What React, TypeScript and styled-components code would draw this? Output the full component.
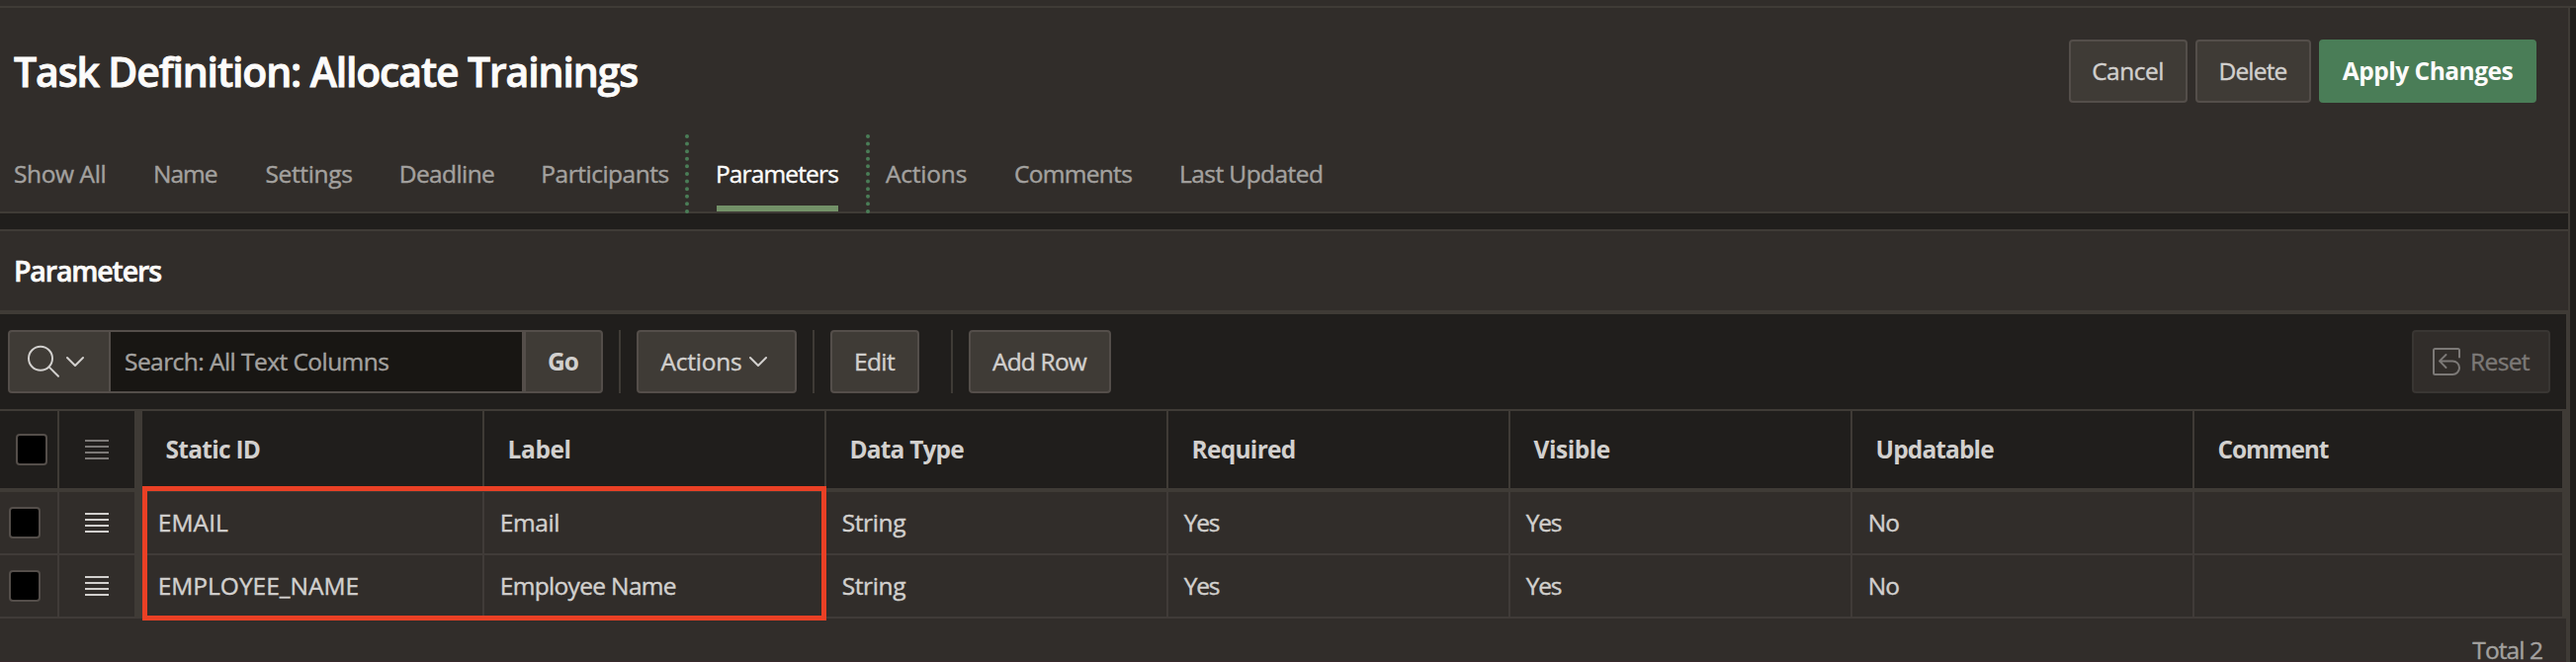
import React from 'react';
import styled, { createGlobalStyle, css } from 'styled-components';

const color = {
  panel: '#312d2a',
  dark: '#201e1c',
  field: '#181613',
  line: '#3f3b36',
  rowLine: '#403b38',
  button: '#3f3b36',
  buttonBorder: '#544e4a',
  muted: '#a3a19f',
  text: '#d2d0ce',
  white: '#fcfbfa',
  green: '#4a7d57',
  underline: '#739168',
  disabled: '#7c7977',
  highlight: '#ea4025',
};

const GlobalStyle = createGlobalStyle`
  * { box-sizing: border-box; }
  body {
    margin: 0;
    height: 670px;
    overflow: hidden;
    background: ${color.dark};
    color: ${color.text};
    font: 400 24.5px 'Open Sans', 'Noto Sans', sans-serif;
    -webkit-text-stroke-width: 0.4px;
  }
`;

const Page = styled.div`
  display: flex;
  flex-direction: column;
  height: 670px;
`;

const TopStrip = styled.div`
  flex: none;
  height: 8px;
  background: ${color.panel};
  border-bottom: 2px solid ${color.line};
`;

const Frame = styled.main`
  width: 2600px;
  flex: 1;
  display: flex;
  flex-direction: column;
  border-right: 2px solid ${color.line};
`;

const Text = styled.span<{ $track?: number }>`
  white-space: nowrap;
  letter-spacing: ${(p) => p.$track ?? 0}px;
`;

const PageHeader = styled.header`
  flex: none;
  height: 208px;
  background: ${color.panel};
  border-bottom: 2px solid ${color.line};
`;

const TitleRow = styled.div`
  height: 128px;
  display: flex;
  align-items: center;
  justify-content: space-between;
  padding: 0 32px 0 14px;
`;

const Title = styled.h1`
  margin: 0;
  font-size: 41px;
  line-height: 56px;
  font-weight: 600;
  letter-spacing: -1.14px;
  -webkit-text-stroke-width: 0.9px;
  color: ${color.white};
  white-space: nowrap;
`;

const ButtonGroup = styled.div`
  display: flex;
  gap: 8px;
`;

const Button = styled.button<{ $width: number; $variant?: 'hot' | 'disabled' }>`
  width: ${(p) => p.$width}px;
  height: 64px;
  display: flex;
  align-items: center;
  justify-content: center;
  gap: 6px;
  padding: 0 1px 0 0;
  font: inherit;
  line-height: 60px;
  color: ${color.text};
  background: ${color.button};
  border: 2px solid ${color.buttonBorder};
  border-radius: 4px;
  ${(p) =>
    p.$variant === 'hot' &&
    css`
      padding: 0;
      font-weight: 700;
      -webkit-text-stroke-width: 0;
      color: ${color.white};
      background: ${color.green};
      border-color: ${color.green};
    `}
  ${(p) =>
    p.$variant === 'disabled' &&
    css`
      gap: 10px;
      padding: 0;
      color: ${color.disabled};
      background: ${color.panel};
      border-color: #393633;
    `}
`;

const MenuButton = styled(Button)`
  padding-right: 5px;
`;

const Tabs = styled.nav`
  display: flex;
  height: 80px;
  padding-left: 14px;
  color: ${color.muted};
`;

const Tab = styled.a<{ $width: number }>`
  flex: none;
  width: ${(p) => p.$width}px;
  height: 80px;
  line-height: 80px;
`;

const ActiveTab = styled(Tab)`
  margin-right: 16px;
  padding: 0 28px;
  border: dotted ${color.green};
  border-width: 0 4px;
  color: ${color.white};
`;

const ActiveLabel = styled.span`
  display: block;
  height: 78px;
  width: 123px;
  text-indent: -1px;
  border-bottom: 6px solid ${color.underline};
`;

const Region = styled.section`
  flex: 1;
  display: flex;
  flex-direction: column;
  margin-top: 16px;
  border-top: 2px solid ${color.line};
`;

const RegionHeader = styled.h2`
  flex: none;
  height: 80px;
  margin: 0;
  padding-left: 14px;
  background: ${color.panel};
  color: ${color.white};
  font-size: 28.5px;
  line-height: 80px;
  font-weight: 600;
  letter-spacing: -1.15px;
  -webkit-text-stroke-width: 0.6px;
`;

const GridFrame = styled.div`
  flex: 1;
  display: flex;
  flex-direction: column;
  border-top: 4px solid ${color.line};
  border-right: 2px solid ${color.line};
  background: ${color.panel};
`;

const Toolbar = styled.div`
  flex: none;
  height: 98px;
  display: flex;
  align-items: center;
  padding: 0 16px 0 8px;
  background: ${color.dark};
  border-bottom: 2px solid ${color.line};
`;

const SearchGroup = styled.div`
  display: flex;
  width: 602px;
  height: 64px;
  overflow: hidden;
  border: 2px solid ${color.buttonBorder};
  border-radius: 4px;
  background: ${color.button};
`;

const SearchMenu = styled.div`
  width: 102px;
  display: flex;
  align-items: center;
  gap: 5px;
  padding-left: 17px;
  border-right: 2px solid ${color.buttonBorder};
`;

const SearchField = styled.div`
  width: 420px;
  padding-left: 14px;
  line-height: 60px;
  color: ${color.muted};
  background: ${color.field};
  border-right: 4px solid ${color.buttonBorder};
`;

const Go = styled.div`
  flex: 1;
  padding-right: 1px;
  font-weight: 700;
  -webkit-text-stroke-width: 0;
  line-height: 60px;
  text-align: center;
`;

const Separator = styled.i<{ $before?: number }>`
  width: 2px;
  height: 64px;
  margin: 0 16px 0 ${(p) => p.$before ?? 16}px;
  background: ${color.line};
`;

const Spacer = styled.div`
  flex: 1;
`;

const Table = styled.div`
  position: relative;
  flex: none;
  display: grid;
  grid-template-columns: 60px 84px repeat(6, 346px) 1fr;
  grid-template-rows: 82px 64px 64px;
  border-right: 4px solid ${color.line};
`;

const HeaderCell = styled.div`
  padding-left: 23.5px;
  line-height: 78px;
  font-weight: 700;
  -webkit-text-stroke-width: 0;
  background: ${color.dark};
  border-right: 2px solid ${color.line};
  border-bottom: 4px solid ${color.line};
  &:nth-child(9n) {
    border-right: 0;
  }
`;

const Cell = styled.div`
  padding-left: 15.7px;
  line-height: 62px;
  border-right: 2px solid ${color.rowLine};
  border-bottom: 2px solid ${color.rowLine};
  &:nth-child(9n) {
    border-right: 0;
  }
`;

const iconCell = css<{ $menu?: boolean; $inset?: number }>`
  display: flex;
  align-items: center;
  padding-left: ${(p) => p.$inset ?? 26}px;
  ${(p) => p.$menu && `border-right: 8px solid ${color.line};`}
`;
const HeaderIconCell = styled(HeaderCell)<{ $menu?: boolean; $inset?: number }>`
  ${iconCell}
`;
const IconCell = styled(Cell)<{ $menu?: boolean; $inset?: number }>`
  ${iconCell}
`;

const Checkbox = styled.span`
  width: 32px;
  height: 32px;
  background: #000;
  border: 2px solid ${color.buttonBorder};
  border-radius: 4px;
`;

const Highlight = styled.div`
  position: absolute;
  left: 144px;
  top: 76px;
  width: 692px;
  height: 136px;
  border: 5px solid ${color.highlight};
`;

const Footer = styled.footer`
  height: 44px;
  display: flex;
  justify-content: flex-end;
  padding: 15px 24px 0 0;
  color: ${color.muted};
  border-bottom: 1px solid #38292c;
`;

const FooterText = styled(Text)`
  height: 28px;
  line-height: 34px;
`;

const MenuIcon = ({ muted }: { muted?: boolean }) => (
  <svg width="24" height="20" viewBox="0 0 24 20" stroke={muted ? color.disabled : color.text} strokeWidth="2">
    <path d="M0 1H24M0 7H24M0 13H24M0 19H24" />
  </svg>
);

const Chevron = () => (
  <svg width="20" height="12" viewBox="0 0 20 12" fill="none" stroke={color.text} strokeWidth="2" strokeLinecap="round" strokeLinejoin="round">
    <path d="M2 2L10 10L18 2" />
  </svg>
);

const SearchIcon = () => (
  <svg width="34" height="34" viewBox="0 0 34 34" fill="none" stroke={color.text} strokeWidth="2" strokeLinecap="round">
    <circle cx="14" cy="13.7" r="12" />
    <path d="M22.6 22.4L32 31.8" />
  </svg>
);

const ResetIcon = () => (
  <svg width="28" height="28" viewBox="0 0 28 28" fill="none" stroke={color.disabled} strokeWidth="2" strokeLinecap="round" strokeLinejoin="round">
    <path d="M27 9.5V2.5Q27 1 25.5 1H2.5Q1 1 1 2.5V25.5Q1 27 2.5 27H20.2A6.8 6.8 0 0 0 20.2 13.4H7M13.5 7L7 13.4L13.5 20" />
  </svg>
);

const columns: [string, number][] = [
  ['Static ID', -0.72],
  ['Label', -0.38],
  ['Data Type', -0.82],
  ['Required', -0.72],
  ['Visible', -0.47],
  ['Updatable', -0.88],
  ['Comment', -1.2],
];

const rows: [string, number][][] = [
  [['EMAIL', 0.1], ['Email', -0.4], ['String', -0.38], ['Yes', -1.2], ['Yes', -1.2], ['No', -0.8], ['', 0]],
  [['EMPLOYEE_NAME', 0], ['Employee Name', -0.66], ['String', -0.38], ['Yes', -1.2], ['Yes', -1.2], ['No', -0.8], ['', 0]],
];

const tabsBefore: [string, number, number][] = [
  ['Show All', 141, -0.39],
  ['Name', 113.5, -1.03],
  ['Settings', 135.3, -0.36],
  ['Deadline', 143.5, -0.61],
  ['Participants', 145.7, -0.49],
];

const tabsAfter: [string, number, number][] = [
  ['Actions', 130, -0.2],
  ['Comments', 167, -0.7],
  ['Last Updated', 160, -0.56],
];

export default function App() {
  return (
    <Page>
      <GlobalStyle />
      <TopStrip />
      <Frame>
        <PageHeader>
          <TitleRow>
            <Title>Task Definition: Allocate Trainings</Title>
            <ButtonGroup>
              <Button $width={120}><Text $track={-0.5}>Cancel</Text></Button>
              <Button $width={117}><Text $track={-0.8}>Delete</Text></Button>
              <Button $width={220} $variant="hot"><Text $track={-0.5}>Apply Changes</Text></Button>
            </ButtonGroup>
          </TitleRow>
          <Tabs>
            {tabsBefore.map(([label, width, track]) => (
              <Tab key={label} $width={width}><Text $track={track}>{label}</Text></Tab>
            ))}
            <ActiveTab $width={187}>
              <ActiveLabel><Text $track={-0.86}>Parameters</Text></ActiveLabel>
            </ActiveTab>
            {tabsAfter.map(([label, width, track]) => (
              <Tab key={label} $width={width}><Text $track={track}>{label}</Text></Tab>
            ))}
          </Tabs>
        </PageHeader>
        <Region>
          <RegionHeader>Parameters</RegionHeader>
          <GridFrame>
            <Toolbar>
              <SearchGroup>
                <SearchMenu>
                  <SearchIcon />
                  <Chevron />
                </SearchMenu>
                <SearchField><Text $track={-0.55}>Search: All Text Columns</Text></SearchField>
                <Go><Text $track={-0.9}>Go</Text></Go>
              </SearchGroup>
              <Separator />
              <MenuButton $width={162}><Text $track={-0.2}>Actions</Text><Chevron /></MenuButton>
              <Separator />
              <Button $width={90}><Text $track={-0.57}>Edit</Text></Button>
              <Separator $before={32} />
              <Button $width={144}><Text $track={-0.8}>Add Row</Text></Button>
              <Spacer />
              <Button $width={140} $variant="disabled"><ResetIcon /><Text $track={-0.65}>Reset</Text></Button>
            </Toolbar>
            <Table>
              <HeaderIconCell $inset={16}><Checkbox /></HeaderIconCell>
              <HeaderIconCell $menu><MenuIcon muted /></HeaderIconCell>
              {columns.map(([label, track]) => (
                <HeaderCell key={label}><Text $track={track}>{label}</Text></HeaderCell>
              ))}
              {rows.map((cells, r) => (
                <React.Fragment key={r}>
                  <IconCell $inset={9}><Checkbox /></IconCell>
                  <IconCell $menu><MenuIcon /></IconCell>
                  {cells.map(([value, track], c) => (
                    <Cell key={c}><Text $track={track}>{value}</Text></Cell>
                  ))}
                </React.Fragment>
              ))}
              <Highlight />
            </Table>
            <Footer><FooterText $track={-0.93}>Total 2</FooterText></Footer>
          </GridFrame>
        </Region>
      </Frame>
    </Page>
  );
}
